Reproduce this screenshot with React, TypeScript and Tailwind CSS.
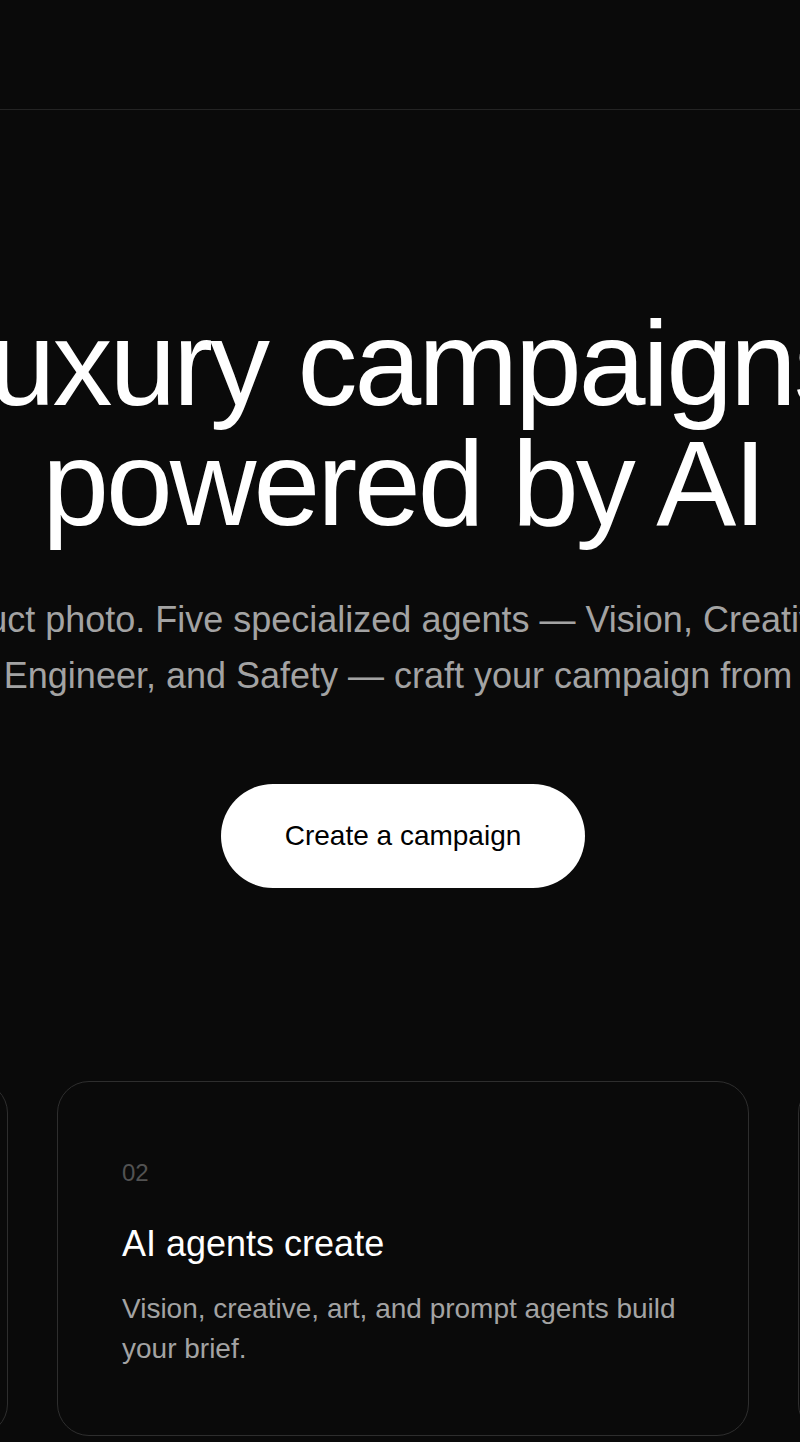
import React from 'react'

const steps = [
  { n: '01', title: 'Upload a photo', body: 'Drop in a single product shot to get started.' },
  { n: '02', title: 'AI agents create', body: 'Vision, creative, art, and prompt agents build your brief.' },
  { n: '03', title: 'Launch your campaign', body: 'Safety-checked visuals, ready to publish.' },
]

const App: React.FC = () => {
  return (
    <div className="min-h-screen w-full overflow-hidden bg-[#0a0a0a] text-white font-['Liberation_Sans',Arial,sans-serif]">
      {/* Header */}
      <header className="h-[110px] border-b border-[#242424] flex justify-center pl-[6px]">
        <div className="w-[2174px] shrink-0 flex items-center justify-between">
          <span className="text-[28px] tracking-tight">Luxe</span>
          <a href="#" className="text-[24px] text-[#a3a3a3]">Sign in</a>
        </div>
      </header>

      {/* Hero */}
      <section className="flex justify-center pl-[6px] pt-[193px] pb-[193px]">
        <div className="w-[1320px] shrink-0 flex flex-col items-center text-center">
          <h1 className="text-[120px] leading-none tracking-tight font-normal">
            Luxury campaigns, powered by AI
          </h1>
          <p className="mt-[49px] text-[36px] leading-[56px] text-[#a3a3a3]">
            Upload a product photo. Five specialized agents — Vision, Creative, Art Director, Prompt Engineer, and Safety — craft your campaign from scratch.
          </p>
          <button className="mt-[80px] rounded-full bg-white px-16 py-8 text-[28px] leading-[40px] text-black">
            Create a campaign
          </button>
        </div>
      </section>

      {/* Steps */}
      <section className="flex justify-center pl-[6px]">
        <div className="shrink-0 flex gap-[49px]">
          {steps.map((s) => (
            <div
              key={s.n}
              className="w-[692px] shrink-0 rounded-[32px] border border-[#2e2e2e] px-16 pt-[75px] pb-[66px]"
            >
              <div className="text-[24px] leading-[32px] text-[#525252]">{s.n}</div>
              <h3 className="mt-8 text-[36px] leading-[45px] font-normal">{s.title}</h3>
              <p className="mt-[23px] text-[28px] leading-[40px] text-[#a3a3a3]">{s.body}</p>
            </div>
          ))}
        </div>
      </section>
    </div>
  )
}

export default App
